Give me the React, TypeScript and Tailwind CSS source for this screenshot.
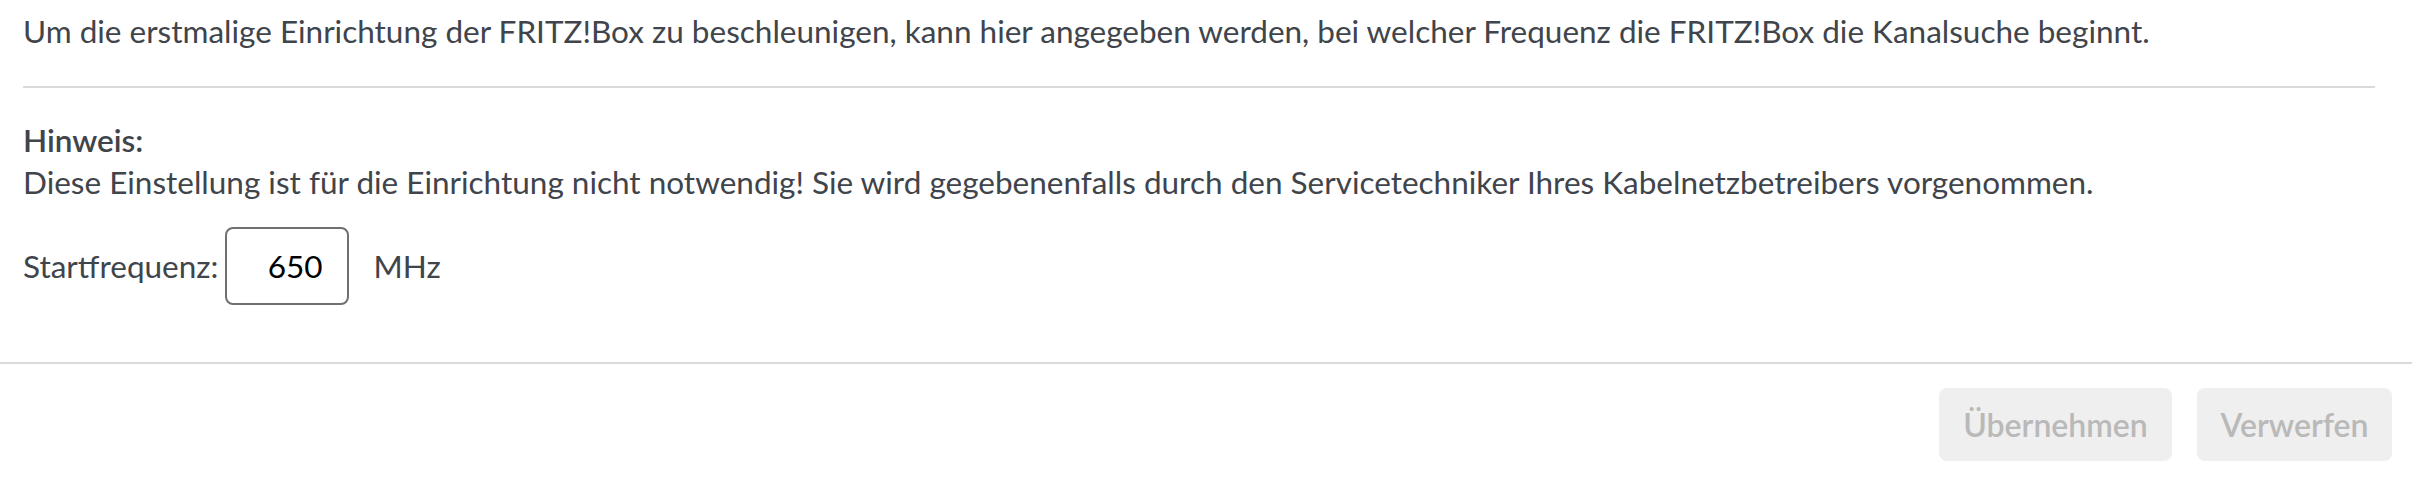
import React, { useState } from "react";

export default function App() {
  const [freq, setFreq] = useState("650");

  return (
    <div
      className="w-full bg-white text-[#40444b] text-[31.5px] leading-[42px]"
      style={{ fontFamily: "Lato, 'Open Sans', sans-serif" }}
    >
      <div className="pl-[23px] pr-[37px]">
        <p className="pt-[10px]">
          Um die erstmalige Einrichtung der FRITZ!Box zu beschleunigen, kann hier angegeben werden, bei welcher
          Frequenz die FRITZ!Box die Kanalsuche beginnt.
        </p>
        <div className="mt-[34px] h-[2px] bg-[#dadada]" />
        <p className="mt-[31px] font-semibold">Hinweis:</p>
        <p>
          Diese Einstellung ist für die Einrichtung nicht notwendig! Sie wird gegebenenfalls durch den
          Servicetechniker Ihres Kabelnetzbetreibers vorgenommen.
        </p>
        <div className="mt-[24px] flex items-center">
          <label htmlFor="startfreq">Startfrequenz:</label>
          <input
            id="startfreq"
            value={freq}
            onChange={(e) => setFreq(e.target.value)}
            className="ml-[7px] w-[124px] h-[78px] rounded-[8px] border-2 border-[#707070] pr-[25px] text-right text-black outline-none"
          />
          <span className="ml-[24px]">MHz</span>
        </div>
      </div>

      <div className="mt-[57px] h-[2px] bg-[#dadada]" />

      <div className="flex justify-end gap-[25px] pt-[24px] pb-[19px] pr-[20px]">
        <button
          disabled
          className="w-[233px] h-[73px] rounded-[8px] bg-[#efefef] text-[#b9b9b9] text-[32px] font-semibold"
        >
          Übernehmen
        </button>
        <button
          disabled
          className="w-[195px] h-[73px] rounded-[8px] bg-[#efefef] text-[#b9b9b9] text-[32px] font-semibold"
        >
          Verwerfen
        </button>
      </div>
    </div>
  );
}
